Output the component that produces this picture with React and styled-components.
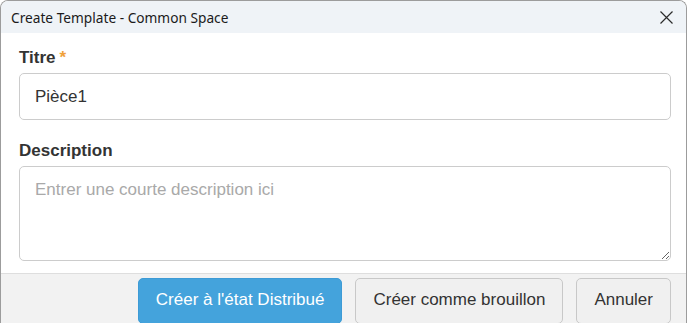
import React from "react";
import styled, { createGlobalStyle } from "styled-components";

const Global = createGlobalStyle`
  html, body { margin: 0; padding: 0; background: #ffffff; overflow: hidden; }
  * { box-sizing: border-box; }
`;

const Window = styled.div`
  width: 687px;
  height: 323px;
  border: 1px solid #9c9c9c;
  border-bottom: none;
  border-radius: 8px 8px 0 0;
  overflow: hidden;
  display: flex;
  flex-direction: column;
  background: #ffffff;
  font-family: "Liberation Sans", Arial, sans-serif;
`;

const TitleBar = styled.div`
  height: 32px;
  flex: none;
  background: #eff3f7;
  display: flex;
  align-items: center;
  justify-content: space-between;
  padding: 0 12px 0 10px;
`;

const Title = styled.span`
  font-family: "Noto Sans", "Open Sans", sans-serif;
  font-size: 13.7px;
  color: #1b1b1b;
`;

const CloseButton = styled.button`
  width: 16px;
  height: 16px;
  padding: 0;
  border: none;
  background: transparent;
  display: flex;
  align-items: center;
  justify-content: center;
  margin-top: 1px;
`;

const Body = styled.div`
  flex: none;
  padding: 13px 15px 12px 18px;
  display: flex;
  flex-direction: column;
`;

const Field = styled.div`
  display: flex;
  flex-direction: column;
  margin-bottom: ${(p) => p.$gap || 0}px;
`;

const Label = styled.label`
  font-size: 17px;
  line-height: 24px;
  font-weight: bold;
  color: #333333;
  margin-bottom: 3px;
`;

const Required = styled.span`
  color: #f0a13a;
  margin-left: 4px;
`;

const Input = styled.input`
  height: 47px;
  width: 100%;
  border: 1px solid #cccccc;
  border-radius: 5px;
  padding: 1px 15px 0;
  font-family: "Liberation Sans", Arial, sans-serif;
  font-size: 17px;
  color: #333333;
  outline: none;
`;

const TextArea = styled.textarea`
  height: 95px;
  width: 100%;
  border: 1px solid #cccccc;
  border-radius: 5px;
  padding: 11px 15px;
  font-family: "Liberation Sans", Arial, sans-serif;
  font-size: 17px;
  line-height: 24px;
  color: #333333;
  resize: vertical;
  outline: none;
  &::placeholder { color: #a9a9a9; }
`;

const Footer = styled.div`
  flex: 1;
  background: #f2f2f2;
  border-top: 1px solid #dedede;
  display: flex;
  justify-content: flex-end;
  align-items: flex-start;
  gap: 13px;
  padding: 4px 15px 0 0;
  overflow: hidden;
`;

const Button = styled.button`
  flex: none;
  height: 46px;
  padding: 0 17px 2px;
  border-radius: 5px;
  font-family: "Liberation Sans", Arial, sans-serif;
  font-size: 17px;
  border: 1px solid ${(p) => (p.$primary ? "#3d9bd6" : "#c8c8c8")};
  background: ${(p) => (p.$primary ? "#44a3dc" : "#f0f0f0")};
  color: ${(p) => (p.$primary ? "#ffffff" : "#333333")};
`;

export default function App() {
  return (
    <>
      <Global />
      <Window>
        <TitleBar>
          <Title>Create Template - Common Space</Title>
          <CloseButton aria-label="Close">
            <svg width="13" height="13" viewBox="0 0 13 13">
              <path d="M0.5 0.5 L12.5 12.5 M12.5 0.5 L0.5 12.5" stroke="#2b2b2b" strokeWidth="1.2" fill="none" />
            </svg>
          </CloseButton>
        </TitleBar>
        <Body>
          <Field $gap={19}>
            <Label>
              Titre<Required>*</Required>
            </Label>
            <Input defaultValue="Pièce1" />
          </Field>
          <Field>
            <Label>Description</Label>
            <TextArea placeholder="Entrer une courte description ici" />
          </Field>
        </Body>
        <Footer>
          <Button $primary>Créer à l'état Distribué</Button>
          <Button>Créer comme brouillon</Button>
          <Button>Annuler</Button>
        </Footer>
      </Window>
    </>
  );
}
